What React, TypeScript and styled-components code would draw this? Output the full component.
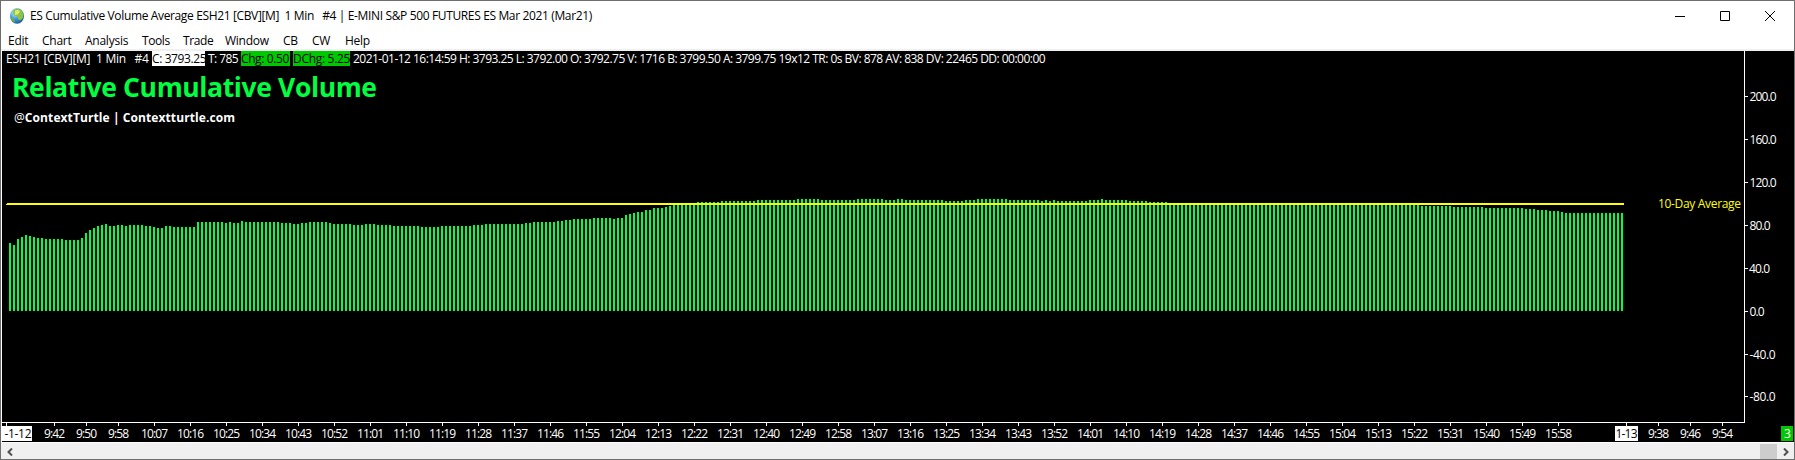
import React from "react";
import styled, { createGlobalStyle } from "styled-components";

const GREEN = "#00ff40";
const UI_FONT = `"Open Sans", "Noto Sans", sans-serif`;

const GlobalStyle = createGlobalStyle`
  *, *::before, *::after { box-sizing: border-box; }
  body { margin: 0; background: #000; }
`;

const WindowFrame = styled.div`
  display: flex;
  flex-direction: column;
  width: 1795px;
  height: 460px;
  border: 1px solid #6e6e6e;
  background: #fff;
  font: 12px/15px ${UI_FONT};
  color: #000;
  overflow: hidden;
  white-space: pre;
`;

const TitleBar = styled.header`
  display: flex;
  align-items: center;
  height: 29px;
  padding: 0 2px 0 8px;
`;

const Title = styled.h1<{ $spacing: number }>`
  flex: 1;
  margin: 0 0 0 5px;
  font: inherit;
  letter-spacing: ${(p) => p.$spacing}px;
`;

const CaptionButton = styled.button`
  display: flex;
  align-items: center;
  justify-content: center;
  width: 45px;
  height: 29px;
  padding: 0;
  border: 0;
  background: none;
`;

const MenuBar = styled.nav`
  display: flex;
  height: 19px;
  padding-left: 7px;
`;

const MenuItem = styled.span<{ $width: number; $spacing?: number }>`
  width: ${(p) => p.$width}px;
  line-height: 22px;
  letter-spacing: ${(p) => p.$spacing ?? -0.25}px;
`;

const Client = styled.main`
  display: flex;
  flex-direction: column;
  height: 393px;
  border-top: 2px solid #f0f0f0;
  border-left: 1px solid #fff;
  background: #000;
  color: #fff;
`;

const StatusLine = styled.div`
  display: flex;
  height: 15px;
  padding-left: 4px;
`;

const Field = styled.span<{ $width: number; $spacing?: number; $bg?: string; $fg?: string }>`
  width: ${(p) => p.$width}px;
  height: 15px;
  line-height: 15px;
  letter-spacing: ${(p) => p.$spacing ?? -0.4}px;
  background: ${(p) => p.$bg ?? "transparent"};
  color: ${(p) => p.$fg ?? "#fff"};
`;

const Chart = styled.svg`
  display: block;
  width: 1792px;
  height: 376px;
  overflow: visible;
  font: 12px ${UI_FONT};
`;

const ScrollBar = styled.div`
  display: flex;
  align-items: center;
  height: 17px;
  padding-top: 1px;
  border-top: 1px solid #fff;
  background: #f0f0f0;
`;

const ScrollArrow = styled.span`
  display: flex;
  justify-content: center;
  width: 17px;
`;

const ScrollTrack = styled.span`
  flex: 1;
  display: flex;
  justify-content: flex-end;
`;

const ScrollThumb = styled.span`
  width: 17px;
  height: 15px;
  background: #cdcdcd;
`;

/* Bar heights as [height, number of consecutive bars]. */
const RUNS: [number, number][] = [
  [68, 1], [66, 1], [72, 1], [74, 1], [76, 1], [75, 1], [74, 1], [73, 2], [72, 5], [71, 4],
  [73, 1], [78, 1], [81, 1], [83, 1], [85, 1], [86, 1], [87, 1], [85, 2], [86, 2], [85, 1],
  [86, 4], [85, 2], [84, 1], [83, 2], [85, 2], [84, 6], [89, 7], [88, 1], [89, 1], [88, 2],
  [90, 1], [89, 9], [88, 3], [87, 2], [88, 2], [89, 5], [88, 1], [87, 5], [86, 3], [87, 3],
  [86, 4], [85, 2],
  [85, 5], [84, 5], [85, 8], [86, 3], [87, 10], [88, 2], [89, 6], [90, 2], [91, 2], [92, 5],
  [93, 5], [92, 1], [93, 2], [96, 1], [97, 1], [98, 1], [99, 2], [101, 2], [103, 3], [104, 1],
  [105, 1], [107, 6], [109, 6], [110, 9], [111, 10], [112, 1],
  [112, 5], [111, 9], [112, 7], [111, 3], [112, 2], [111, 10], [110, 5], [111, 3], [112, 8],
  [111, 8], [110, 1], [111, 1], [110, 1], [111, 1], [110, 8], [111, 3], [112, 1], [111, 6],
  [110, 5], [109, 5], [107, 8],
  [107, 55], [105, 8], [104, 8], [103, 10], [102, 3], [101, 3], [100, 3], [99, 1], [98, 15],
];

const bars = RUNS.flatMap(([height, count]) => Array<number>(count).fill(height));

const formatTime = (minutes: number) =>
  `${Math.floor(minutes / 60)}:${String(minutes % 60).padStart(2, "0")}`;

const timeTicks: { x: number; label: string }[] = [
  { x: 54, label: "9:42" },
  { x: 86, label: "9:50" },
  { x: 118, label: "9:58" },
  ...Array.from({ length: 40 }, (_, i) => ({ x: 154 + i * 36, label: formatTime(607 + i * 9) })),
  { x: 1658, label: "9:38" },
  { x: 1690, label: "9:46" },
  { x: 1722, label: "9:54" },
];

const valueTicks: [number, string][] = [
  [96, "200.0"], [139, "160.0"], [182, "120.0"], [225, "80.0"],
  [268, "40.0"], [311, "0.0"], [354, "-40.0"], [396, "-80.0"],
];

const valueWidth: Record<number, number> = { 3: 15, 4: 21, 5: 27 };

function Globe() {
  return (
    <svg width="16" height="16" viewBox="0 0 16 16">
      <defs>
        <radialGradient id="sea" cx="0.35" cy="0.3" r="0.8">
          <stop offset="0" stopColor="#c8ecff" />
          <stop offset="0.5" stopColor="#3f97dc" />
          <stop offset="1" stopColor="#164f8c" />
        </radialGradient>
      </defs>
      <ellipse cx="8" cy="8" rx="7" ry="7.700" fill="url(#sea)" />
      <path d="M5 1.500 9 .8l4 2 1.500 3.700-1 4-2.500 2-2-1.500-.5-2.500-3-1L4 5Z" fill="#8cc43a" />
      <path d="M6 2.500 9 1.800l2 1.700-2 3-3 .5Z" fill="#d9ec6c" />
      <path d="m1.500 9 3 1.500 1.500 3-1 .8Q2 12.500 1.500 9Z" fill="#6fae3c" />
    </svg>
  );
}

function VolumeChart() {
  return (
    <Chart viewBox="2 66 1792 376">
      <text x="12" y="97" fontSize="26.500" fontWeight="700" fill={GREEN} textLength="365">
        Relative Cumulative Volume
      </text>
      <text x="14" y="122" fontSize="12" fontWeight="700" fill="#fff" textLength="221">
        <tspan fontWeight="400">@</tspan>ContextTurtle | Contextturtle.com
      </text>
      <g fill={GREEN} shapeRendering="crispEdges">
        {bars.map((height, i) => (
          <rect key={i} x={9 + i * 4} y={311 - height} width="2" height={height} />
        ))}
      </g>
      <path d="M7 203h1617v2H6v-1h1Z" fill="#ff0" shapeRendering="crispEdges" />
      <text x="1658" y="208" fill="#ff0" textLength="83">10-Day Average</text>
      <g fill="#fff" shapeRendering="crispEdges">
        <rect x="1744" y="51" width="1" height="372" />
        <rect x="2" y="422" width="1743" height="1" />
        {valueTicks.map(([y]) => (
          <rect key={y} x="1745" y={y} width="3" height="1" />
        ))}
        {[6, 1626, ...timeTicks.map((t) => t.x)].map((x) => (
          <rect key={x} x={x} y="423" width="1" height="3" />
        ))}
        <rect x="2" y="426" width="30" height="15" />
        <rect x="1615" y="426" width="23" height="15" />
      </g>
      <rect x="1781" y="426" width="12" height="15" fill="#00c800" />
      <g fill="#fff">
        {valueTicks.map(([y, label]) => (
          <text
            key={label}
            x={label.startsWith("4") ? 1749 : 1749.500}
            y={y + 5}
            textLength={label.startsWith("-") ? 26 : valueWidth[label.length]}
          >
            {label}
          </text>
        ))}
        {timeTicks.map(({ x, label }) => (
          <text key={x} x={label.length === 5 ? x - 13 : x - 10} y="438" textLength={label.length === 5 ? 27 : 21}>
            {label}
          </text>
        ))}
        <text x="1784" y="438">3</text>
      </g>
      <text x="4.500" y="438" fill="#000" textLength="27">-1-12</text>
      <text x="1615.500" y="438" fill="#000" textLength="22">1-13</text>
    </Chart>
  );
}

export default function App() {
  return (
    <>
      <GlobalStyle />
      <WindowFrame>
        <TitleBar>
          <Globe />
          <Title $spacing={-0.36}>
            {"ES Cumulative Volume Average ESH21 [CBV][M]  1 Min   #4 | E-MINI S&P 500 FUTURES ES Mar 2021 (Mar21)"}
          </Title>
          <CaptionButton aria-label="Minimize">
            <svg width="10" height="10"><path d="M0 5.500h10" stroke="#000" /></svg>
          </CaptionButton>
          <CaptionButton aria-label="Maximize">
            <svg width="10" height="10"><path d="M.5.5h9v9h-9Z" fill="none" stroke="#000" /></svg>
          </CaptionButton>
          <CaptionButton aria-label="Close">
            <svg width="10" height="10"><path d="m0 0 10 10M10 0 0 10" stroke="#000" /></svg>
          </CaptionButton>
        </TitleBar>
        <MenuBar>
          <MenuItem $width={34}>Edit</MenuItem>
          <MenuItem $width={43}>Chart</MenuItem>
          <MenuItem $width={57}>Analysis</MenuItem>
          <MenuItem $width={41} $spacing={-0.4}>Tools</MenuItem>
          <MenuItem $width={42} $spacing={-0.4}>Trade</MenuItem>
          <MenuItem $width={58}>Window</MenuItem>
          <MenuItem $width={29}>CB</MenuItem>
          <MenuItem $width={33}>CW</MenuItem>
          <MenuItem $width={40}>Help</MenuItem>
        </MenuBar>
        <Client>
          <StatusLine>
            <Field $width={146} $spacing={-0.26}>{"ESH21 [CBV][M]  1 Min   #4"}</Field>
            <Field $width={56} $bg="linear-gradient(90deg, #fff 53px, #000 53px)" $fg="#000">C: 3793.25</Field>
            <Field $width={33} $spacing={-0.55}>T: 785</Field>
            <Field $width={52} $bg="linear-gradient(90deg, #00c800 49px, #000 49px)" $fg="#000">Chg: 0.50</Field>
            <Field $width={60} $spacing={-0.3} $bg="linear-gradient(90deg, #00c800 57px, #000 57px)" $fg="#000">DChg: 5.25</Field>
            <Field $width={700} $spacing={-0.52}>
              2021-01-12 16:14:59 H: 3793.25 L: 3792.00 O: 3792.75 V: 1716 B: 3799.50 A: 3799.75 19x12 TR: 0s BV: 878 AV: 838 DV: 22465 DD: 00:00:00
            </Field>
          </StatusLine>
          <VolumeChart />
        </Client>
        <ScrollBar>
          <ScrollArrow>
            <svg width="6" height="8"><path d="M5 .5 1.500 4 5 7.500" fill="none" stroke="#505050" strokeWidth="2" /></svg>
          </ScrollArrow>
          <ScrollTrack><ScrollThumb /></ScrollTrack>
          <ScrollArrow>
            <svg width="6" height="8"><path d="M1 .5 4.500 4 1 7.500" fill="none" stroke="#505050" strokeWidth="2" /></svg>
          </ScrollArrow>
        </ScrollBar>
      </WindowFrame>
    </>
  );
}
